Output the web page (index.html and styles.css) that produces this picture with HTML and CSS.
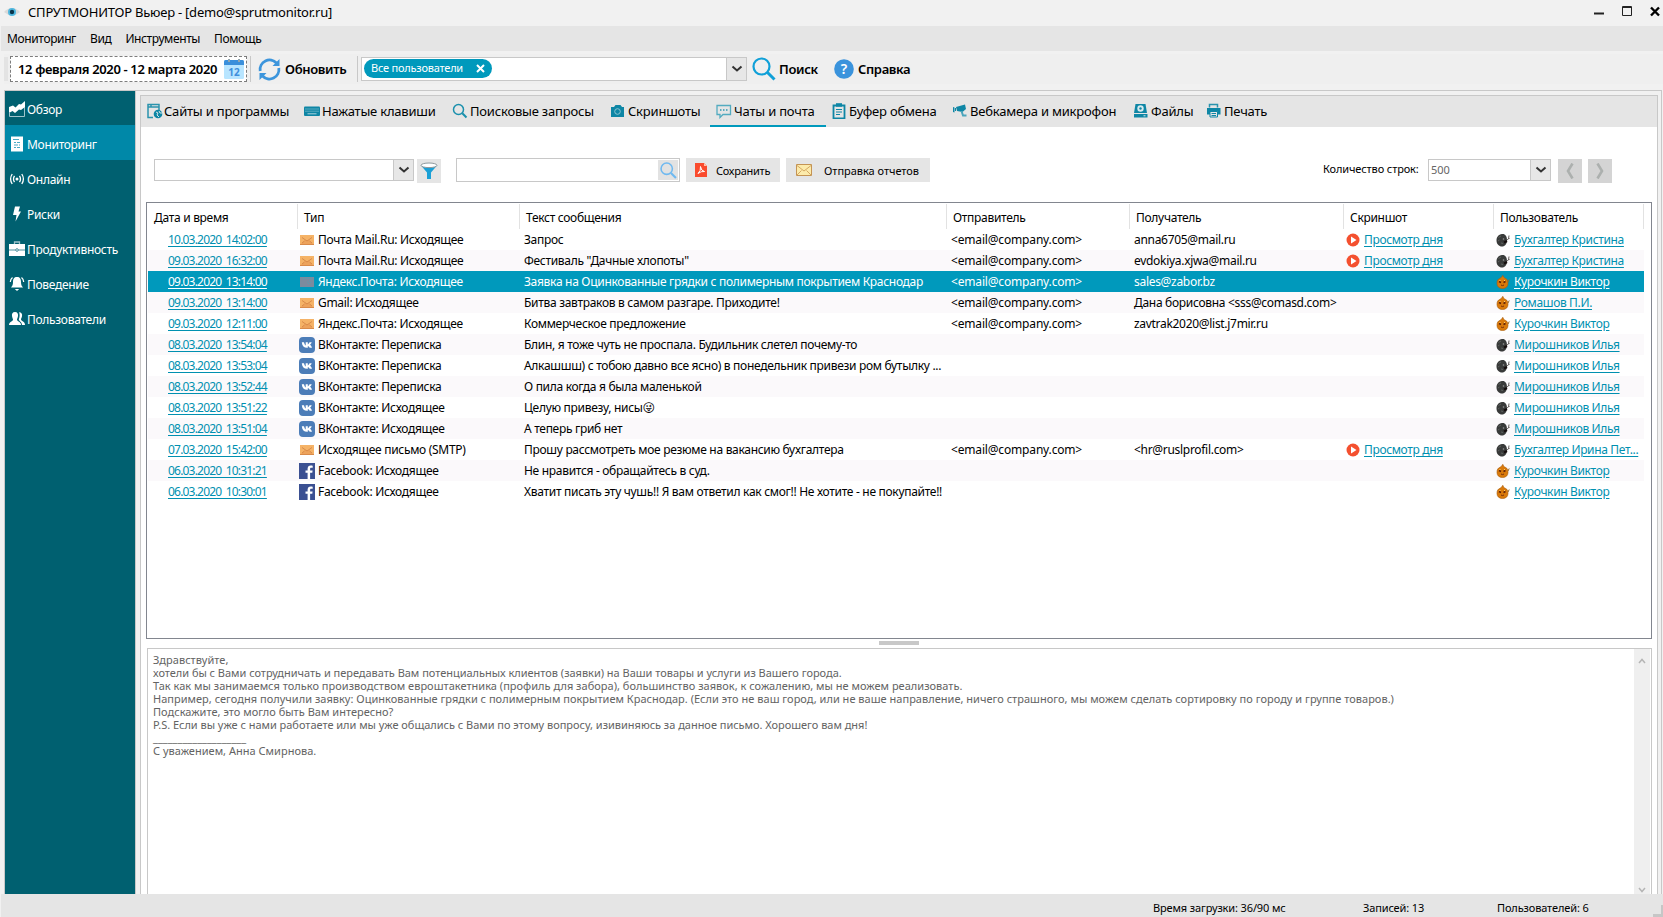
FILE: index.html
```html
<!DOCTYPE html>
<html lang="ru">
<head>
    <meta charset="UTF-8">
    <meta name="viewport" content="width=device-width, initial-scale=1.0">
    <title>СПРУТМОНИТОР Вьюер</title>
    <link rel="stylesheet" href="styles.css">
</head>
<body>
    <!-- shared icons -->
    <svg class="sprite" width="0" height="0">
        <symbol id="chevron" viewBox="0 0 12 8"><path d="M1.5 1.5 6 5.5l4.500-4" fill="none" stroke="currentColor" stroke-width="2"/></symbol>
        <symbol id="magnifier" viewBox="0 0 24 24"><circle cx="9.500" cy="9.500" r="8" fill="none" stroke="currentColor" stroke-width="2.200"/><path d="M15.500 15.500 22.500 22.500" stroke="currentColor" stroke-width="3"/></symbol>
        <symbol id="mail" viewBox="0 0 14 10"><path d="M0 0h14v10H0z" fill="#f5b367"/><path d="M0 10 5 5h4l5 5z" fill="#eda35c"/><path d="M2 2.500 7 6l5-3.500M0 9.500h14M2 8l2.500-2M12 8 9.500 6" fill="none" stroke="#d98b4a"/></symbol>
        <symbol id="mail-selected" viewBox="0 0 14 10"><path d="M0 0h14v10H0z" fill="#7b8b9e"/><path d="M3 1.500h9M7 5h1M9 4h1M8 6.500h1M10 5.500h1" stroke="#5f9aae" stroke-dasharray="1 1"/></symbol>
        <symbol id="vk" viewBox="0 0 16 16"><rect width="16" height="16" rx="4" fill="#4c7db8"/><path d="M2.800 5.200h2.200C5.300 6.800 5.900 7.900 6.700 8.400V5.200h2.100v2.200c.8-.3 1.300-1.200 1.700-2.200h2.200c-.3 1.200-1 2-1.700 2.600.9.600 1.600 1.500 2 2.900h-2.300c-.4-.9-1-1.600-1.900-1.800v1.800h-.7C5 10.700 3.100 8.900 2.800 5.200z" fill="#fff"/></symbol>
        <symbol id="fb" viewBox="0 0 16 16"><path d="M0 0h16v16H0z" fill="#3b5092"/><path d="M8.600 16V9.800H6.500V7.500h2.100V5.800c0-2.100 1.200-3.300 3.100-3.300.9 0 1.800.1 2 .2v2.100h-1.400c-1 0-1.200.5-1.200 1.200v1.500h2.500l-.3 2.300h-2.200V16z" fill="#fff"/></symbol>
        <symbol id="play" viewBox="0 0 14 14"><circle cx="7" cy="7" r="6.500" fill="#f4502f"/><path d="M5 3.500 10.500 7 5 10.500z" fill="#fff"/></symbol>
        <symbol id="dark" viewBox="0 0 14 14"><path d="M6 1C9 .5 11 3 11 7s-2 6.500-5 6.500S.5 11 .5 7.500 2.500 1.500 6 1z" fill="#393b3a"/><path d="M2.500 4.500 5 3M2 8l1.500-1M5 10l2 .5" stroke="#5d615e"/><path d="M10 7.500 12.500 6l.5-3.500M12.500 6l1-1" fill="none" stroke="#66605e"/><circle cx="7.500" cy="6" r=".8" fill="#999"/><path d="M8 9.500 11 8" stroke="#150d0d" stroke-width="2"/></symbol>
        <symbol id="orange" viewBox="0 0 14 14"><path d="M6.800.3c.6 1.500 1 2.300 2.500 3C11.500 4.200 12 6 12 8.500c0 3-2.200 5-5.500 5S1 11.500 1 8.500s.8-4.300 3-5.200C5.500 2.500 6.200 1.500 6.800.3z" fill="#d97a0b" stroke="#a65a0c" stroke-width=".6"/><path d="M3 6.500l2 1M9.500 6.500l-2 1" stroke="#5c1f08" stroke-width="1.400"/><path d="M5 10q1.500 1.200 3 0" fill="none" stroke="#742d0a"/><path d="M3.500 5.500h1M8 5.500h1" stroke="#ffd06b"/><path d="M12 7l1.200-2.500" stroke="#9a6d2a"/></symbol>
    </svg>

    <div class="titlebar">
        <svg class="eye" width="16" height="10" viewBox="0 0 16 10"><path d="M0 5Q8-3 16 5 8 12 0 5z" fill="#dadada"/><circle cx="8" cy="5" r="4" fill="#4fb8e0"/><circle cx="8" cy="5" r="2.200" fill="#08344a"/></svg>
        <span class="title">СПРУТМОНИТОР Вьюер - [demo@sprutmonitor.ru]</span>
        <svg class="window-buttons" width="68" height="12" viewBox="0 0 68 12">
            <path d="M0 7.500h10" stroke="#222" stroke-width="2"/>
            <path d="M28.500.5h9v9h-9zM28 1.500h10" fill="none" stroke="#222"/>
            <path d="m57 1.500 8 8M65 1.500l-8 8" stroke="#000" stroke-width="2.400"/>
        </svg>
    </div>

    <div class="menu">
        <span>Мониторинг</span>
        <span>Вид</span>
        <span>Инструменты</span>
        <span>Помощь</span>
    </div>

    <div class="toolbar">
        <div class="grip"></div>
        <div class="date-range">
            <span>12 февраля 2020 - 12 марта 2020</span>
            <svg width="20" height="20" viewBox="0 0 20 20"><rect y="1" width="20" height="19" rx="1.500" fill="#b8e5ff"/><path d="M0 6V2.500Q0 1 1.500 1h17Q20 1 20 2.500V6z" fill="#3a8fdb"/><path d="M5 0v3M15 0v3" stroke="#93a5ad" stroke-width="2"/><text class="cal-day" x="10" y="16.500" text-anchor="middle" fill="#3f8fdc">12</text></svg>
        </div>
        <div class="separator"></div>
        <div class="refresh">
            <svg width="23" height="23" viewBox="0 0 23 23"><path d="M2.200 13A9.500 9.500 0 0 1 18.500 5M20.800 10A9.500 9.500 0 0 1 4.500 18" fill="none" stroke="#3c95dc" stroke-width="2.800"/><path d="M21.500 1v7h-7zM1.500 22v-7h7z" fill="#3c95dc"/></svg>
            <span>Обновить</span>
        </div>
        <div class="separator"></div>
        <div class="users-combo">
            <div class="users-value">
                <span class="pill"><span>Все пользователи</span><svg width="9" height="9" viewBox="0 0 9 9"><path d="m1 1 7 7M8 1 1 8" stroke="#fff" stroke-width="2"/></svg></span>
            </div>
            <div class="drop"><svg width="12" height="8"><use href="#chevron"/></svg></div>
        </div>
        <svg class="find-icon" width="24" height="24"><use href="#magnifier"/></svg>
        <span class="find">Поиск</span>
        <svg class="help-icon" width="20" height="20" viewBox="0 0 20 20"><circle cx="10" cy="10" r="9.800" fill="#3a93dc"/><text class="help-mark" x="10" y="15" text-anchor="middle" fill="#fff">?</text></svg>
        <span class="help">Справка</span>
    </div>

    <div class="workspace">
        <div class="sidebar">
            <div class="nav">
                <svg width="16" height="16" viewBox="0 0 16 16"><path d="M.5 15.500h15V5" fill="none" stroke="#9fc4cc"/><path d="M0 12V6l4-1.500 2.500 2L10 3l2 .5L16 0v6l-4 3-2-.5L6 12l-2.500-2z" fill="#fff"/><path d="M.5 11v4.500" stroke="#9fc4cc"/></svg>
                <span>Обзор</span>
            </div>
            <div class="nav active">
                <svg width="16" height="16" viewBox="0 0 16 16"><path d="M2 .5h12v15H2z" fill="#fff"/><path d="M4 3.500h6M5 6.500h2M8 6.500h3M5 9h4M10 9h1M5 11.500h2M8 11.500h3" stroke="#4baac4"/></svg>
                <span>Мониторинг</span>
            </div>
            <div class="nav">
                <svg width="16" height="16" viewBox="0 0 16 16"><circle cx="8" cy="8" r="1.500" fill="#fff"/><path d="M5.500 4.800q-2 3.200 0 6.400M10.500 4.800q2 3.200 0 6.400M3.200 3q-3.200 5 0 10M12.800 3q3.200 5 0 10" fill="none" stroke="#fff" stroke-width="1.300"/></svg>
                <span>Онлайн</span>
            </div>
            <div class="nav">
                <svg width="16" height="16" viewBox="0 0 16 16"><path d="M6 .5h5L9.500 5.500H12L6.500 15.500 7.500 9H4z" fill="#fff"/></svg>
                <span>Риски</span>
            </div>
            <div class="nav">
                <svg width="16" height="16" viewBox="0 0 16 16"><path d="M5.500 3V1h5v2" fill="none" stroke="#9fc4cc" stroke-width="1.300"/><path d="M0 3h16v12H0z" fill="#fff"/><path d="M0 9h16" stroke="#4f919e"/><circle cx="8" cy="9" r="1.300" fill="#fff" stroke="#4f919e"/></svg>
                <span>Продуктивность</span>
            </div>
            <div class="nav">
                <svg width="16" height="16" viewBox="0 0 16 16"><path d="M8 1c3 0 4 2 4 5 0 2.500.6 4 2 5.500H2C3.400 10 4 8.500 4 6c0-3 1-5 4-5z" fill="#fff"/><path d="M5.800 13h4.400L8 15z" fill="#fff"/><path d="M3.500 1.500Q1.500 3 1.300 6M12.500 1.500q2 1.500 2.200 4.500" fill="none" stroke="#fff" stroke-width="1.200"/></svg>
                <span>Поведение</span>
            </div>
            <div class="nav">
                <svg width="16" height="16" viewBox="0 0 16 16"><path d="M6 1c2.500 0 3.300 1.700 3 4-.2 1.700-.8 2.500-1 3.500 0 2 4 2 4 5.500H0c0-3.500 4-3.500 4-5.500C3.800 7.500 3.200 6.700 3 5 2.700 2.700 3.500 1 6 1z" fill="#fff"/><path d="M10 1.200c2.500 0 3.500 1.800 3 4-.3 1.500-.8 2-1 3 0 2 4 2 4 5.800h-3c0-3-3.200-4-3.200-5.500C10.800 6 11 3 10 1.200z" fill="#fff"/></svg>
                <span>Пользователи</span>
            </div>
        </div>

        <div class="main">
            <div class="tabs">
                <div class="tab">
                    <svg width="16" height="16" viewBox="0 0 16 16"><path d="M6 14.500H1V1.500h11V7M1 4h11M4 1v3" fill="none" stroke="#2a93ad" stroke-width="1.500"/><circle cx="11" cy="11" r="4.300" fill="#0e86a5"/><path d="M9 9l2 1-1 2 2 2M12 8l1 2 2 0" fill="none" stroke="#d3e5e9"/></svg>
                    <span>Сайты и программы</span>
                </div>
                <div class="tab">
                    <svg width="16" height="16" viewBox="0 0 16 16"><rect x="0" y="3.500" width="16" height="9.500" rx="1" fill="#0e86a5"/><path d="M1.500 6h13M1.500 8.200h13" stroke="#a9d2dd" stroke-dasharray="1 1"/><path d="M3.500 10.800h9" stroke="#a9d2dd"/></svg>
                    <span>Нажатые клавиши</span>
                </div>
                <div class="tab">
                    <svg width="16" height="16" viewBox="0 0 16 16"><circle cx="6.500" cy="6.500" r="5" fill="none" stroke="#1b90ad" stroke-width="1.500"/><path d="M10.300 10.300 14.500 14.500" stroke="#1b90ad" stroke-width="2"/></svg>
                    <span>Поисковые запросы</span>
                </div>
                <div class="tab">
                    <svg width="16" height="16" viewBox="0 0 16 16"><path d="M1 4h3l1.500-2h5L12 4h2v10H1z" fill="#0e86a5"/><circle cx="7.500" cy="8.500" r="2.800" fill="none" stroke="#8dc5d3"/></svg>
                    <span>Скриншоты</span>
                </div>
                <div class="tab active">
                    <svg width="16" height="16" viewBox="0 0 16 16"><path d="M1 2.500h13.500v9H7l-3 3v-3H1z" fill="none" stroke="#53abc0" stroke-width="1.300"/><path d="M4 7h1.500M7 7h1.500M10 7h1.500" stroke="#2f98b2" stroke-width="1.500"/></svg>
                    <span>Чаты и почта</span>
                </div>
                <div class="tab">
                    <svg width="16" height="16" viewBox="0 0 16 16"><path d="M2.500 2.500h11v13h-11z" fill="none" stroke="#0e86a5" stroke-width="1.800"/><path d="M5 .2h6v3.500H5z" fill="#0e86a5"/><path d="M5 6.500h6M5 9h6M5 11.500h4" stroke="#0e86a5"/></svg>
                    <span>Буфер обмена</span>
                </div>
                <div class="tab">
                    <svg width="16" height="16" viewBox="0 0 16 16"><path d="M4 4l9-2.500 1 4.500-3.500 3L5 8z" fill="#0e86a5"/><path d="M1 4l1.500.5v5L1 9zM3 5h1v3H3z" fill="#0e86a5"/><path d="M9.500 8l1.500 4.500 3.500 0" fill="none" stroke="#4ba5bc" stroke-width="2"/></svg>
                    <span>Вебкамера и микрофон</span>
                </div>
                <div class="tab">
                    <svg width="16" height="16" viewBox="0 0 16 16"><path d="M2.500 1h10l1.500 9H1z" fill="#0e86a5"/><path d="M1 11h13.500v3.500H1z" fill="#0e86a5"/><circle cx="7.500" cy="5.500" r="3.200" fill="#d7eaee"/><circle cx="7.500" cy="5.500" r="1.200" fill="#0e86a5"/><path d="M10.500 12.800h2" stroke="#d7eaee"/></svg>
                    <span>Файлы</span>
                </div>
                <div class="tab">
                    <svg width="16" height="16" viewBox="0 0 16 16"><path d="M3.500 4.500V1.500h8v3" fill="none" stroke="#2a93ad" stroke-width="1.500"/><path d="M1 5h13.500v6.500H1z" fill="#0e86a5"/><path d="M4 8.500h7.500v5.500H4z" fill="#e5e5e5" stroke="#0e86a5"/><path d="M5.500 10.500h4.500M5.500 12.500h4.500" stroke="#0e86a5"/></svg>
                    <span>Печать</span>
                </div>
            </div>

            <div class="filters">
                <div class="combo filter-combo"><span></span><div class="drop"><svg width="12" height="8"><use href="#chevron"/></svg></div></div>
                <div class="funnel"><svg width="18" height="18" viewBox="0 0 18 18"><path d="M1 3.500 7 10.500V17h4v-6.500l6-7z" fill="#1ba0d6"/><ellipse cx="9" cy="3.300" rx="8" ry="2.300" fill="#fff" stroke="#8f9a9e"/></svg></div>
                <div class="search"><div class="search-button"><svg width="17" height="17"><use href="#magnifier"/></svg></div></div>
                <div class="button save">
                    <svg width="12" height="14" viewBox="0 0 12 14"><path d="M0 0h9l3 3v11H0z" fill="#fa4b2d"/><path d="M9 0v3h3z" fill="#ffc2a8"/><path d="M3 10.500Q6 8 5.500 3.500 6 8 9.500 8.500 6 8 3 10.500z" fill="none" stroke="#fff"/></svg>
                    <span>Сохранить</span>
                </div>
                <div class="button reports">
                    <svg width="16" height="12" viewBox="0 0 16 12"><path d="M.5.500h15v11H.5z" fill="#fcebab" stroke="#c49454"/><path d="M1 1.500 8 7l7-5.500M1 11l4.500-4.500M15 11l-4.500-4.500" fill="none" stroke="#d5a763"/></svg>
                    <span>Отправка отчетов</span>
                </div>
                <span class="rows-label">Количество строк:</span>
                <div class="combo rows-combo"><span>500</span><div class="drop"><svg width="12" height="8"><use href="#chevron"/></svg></div></div>
                <div class="page"><svg width="8" height="16" viewBox="0 0 8 16"><path d="M6.500.5 2 8l4.500 7.500" fill="none" stroke="#acb0ae" stroke-width="2.600"/></svg></div>
                <div class="page"><svg width="8" height="16" viewBox="0 0 8 16"><path d="M1.500.5 6 8 1.500 15.500" fill="none" stroke="#acb0ae" stroke-width="2.600"/></svg></div>
            </div>

            <div class="grid">
                <table>
                    <colgroup><col class="c-date"><col class="c-type"><col class="c-text"><col class="c-from"><col class="c-to"><col class="c-shot"><col class="c-user"></colgroup>
                    <thead>
                        <tr><th><span>Дата и время</span></th><th><span>Тип</span></th><th><span>Текст сообщения</span></th><th><span>Отправитель</span></th><th><span>Получатель</span></th><th><span>Скриншот</span></th><th><span>Пользователь</span></th></tr>
                    </thead>
                    <tbody>
                        <tr><td><a>10.03.2020 14:02:00</a></td><td><svg class="env"><use href="#mail"/></svg>Почта Mail.Ru: Исходящее</td><td>Запрос</td><td>&lt;email@company.com&gt;</td><td>anna6705@mail.ru</td><td><svg class="play"><use href="#play"/></svg><a>Просмотр дня</a></td><td><svg class="face"><use href="#dark"/></svg><a>Бухгалтер Кристина</a></td></tr>
                        <tr><td><a>09.03.2020 16:32:00</a></td><td><svg class="env"><use href="#mail"/></svg>Почта Mail.Ru: Исходящее</td><td>Фестиваль "Дачные хлопоты"</td><td>&lt;email@company.com&gt;</td><td>evdokiya.xjwa@mail.ru</td><td><svg class="play"><use href="#play"/></svg><a>Просмотр дня</a></td><td><svg class="face"><use href="#dark"/></svg><a>Бухгалтер Кристина</a></td></tr>
                        <tr class="selected"><td><a>09.03.2020 13:14:00</a></td><td><svg class="env"><use href="#mail-selected"/></svg>Яндекс.Почта: Исходящее</td><td>Заявка на Оцинкованные грядки с полимерным покрытием Краснодар</td><td>&lt;email@company.com&gt;</td><td>sales@zabor.bz</td><td></td><td><svg class="face"><use href="#orange"/></svg><a>Курочкин Виктор</a></td></tr>
                        <tr><td><a>09.03.2020 13:14:00</a></td><td><svg class="env"><use href="#mail"/></svg>Gmail: Исходящее</td><td>Битва завтраков в самом разгаре. Приходите!</td><td>&lt;email@company.com&gt;</td><td>Дана борисовна &lt;sss@comasd.com&gt;</td><td></td><td><svg class="face"><use href="#orange"/></svg><a>Ромашов П.И.</a></td></tr>
                        <tr><td><a>09.03.2020 12:11:00</a></td><td><svg class="env"><use href="#mail"/></svg>Яндекс.Почта: Исходящее</td><td>Коммерческое предложение</td><td>&lt;email@company.com&gt;</td><td>zavtrak2020@list.j7mir.ru</td><td></td><td><svg class="face"><use href="#orange"/></svg><a>Курочкин Виктор</a></td></tr>
                        <tr><td><a>08.03.2020 13:54:04</a></td><td><svg class="social"><use href="#vk"/></svg>ВКонтакте: Переписка</td><td>Блин, я тоже чуть не проспала. Будильник слетел почему-то</td><td></td><td></td><td></td><td><svg class="face"><use href="#dark"/></svg><a>Мирошников Илья</a></td></tr>
                        <tr><td><a>08.03.2020 13:53:04</a></td><td><svg class="social"><use href="#vk"/></svg>ВКонтакте: Переписка</td><td>Алкашшш) с тобою давно все ясно) в понедельник привези ром бутылку ...</td><td></td><td></td><td></td><td><svg class="face"><use href="#dark"/></svg><a>Мирошников Илья</a></td></tr>
                        <tr><td><a>08.03.2020 13:52:44</a></td><td><svg class="social"><use href="#vk"/></svg>ВКонтакте: Переписка</td><td>О пила когда я была маленькой</td><td></td><td></td><td></td><td><svg class="face"><use href="#dark"/></svg><a>Мирошников Илья</a></td></tr>
                        <tr><td><a>08.03.2020 13:51:22</a></td><td><svg class="social"><use href="#vk"/></svg>ВКонтакте: Исходящее</td><td>Целую привезу, нисы<span class="emoji">😜</span></td><td></td><td></td><td></td><td><svg class="face"><use href="#dark"/></svg><a>Мирошников Илья</a></td></tr>
                        <tr><td><a>08.03.2020 13:51:04</a></td><td><svg class="social"><use href="#vk"/></svg>ВКонтакте: Исходящее</td><td>А теперь гриб нет</td><td></td><td></td><td></td><td><svg class="face"><use href="#dark"/></svg><a>Мирошников Илья</a></td></tr>
                        <tr><td><a>07.03.2020 15:42:00</a></td><td><svg class="env"><use href="#mail"/></svg>Исходящее письмо (SMTP)</td><td>Прошу рассмотреть мое резюме на вакансию бухгалтера</td><td>&lt;email@company.com&gt;</td><td>&lt;hr@ruslprofil.com&gt;</td><td><svg class="play"><use href="#play"/></svg><a>Просмотр дня</a></td><td><svg class="face"><use href="#dark"/></svg><a>Бухгалтер Ирина Пет...</a></td></tr>
                        <tr><td><a>06.03.2020 10:31:21</a></td><td><svg class="social"><use href="#fb"/></svg>Facebook: Исходящее</td><td>Не нравится - обращайтесь в суд.</td><td></td><td></td><td></td><td><svg class="face"><use href="#orange"/></svg><a>Курочкин Виктор</a></td></tr>
                        <tr><td><a>06.03.2020 10:30:01</a></td><td><svg class="social"><use href="#fb"/></svg>Facebook: Исходящее</td><td>Хватит писать эту чушь!! Я вам ответил как смог!! Не хотите - не покупайте!!</td><td></td><td></td><td></td><td><svg class="face"><use href="#orange"/></svg><a>Курочкин Виктор</a></td></tr>
                    </tbody>
                </table>
            </div>

            <div class="splitter"></div>

            <div class="message">
                <div class="message-text">Здравствуйте,<br>
                <span class="tight">хотели бы с Вами сотрудничать и передавать Вам потенциальных клиентов (заявки) на Ваши товары и услуги из Вашего города.</span><br>
                Так как мы занимаемся только производством евроштакетника (профиль для забора), большинство заявок, к сожалению, мы не можем реализовать.<br>
                Например, сегодня получили заявку: Оцинкованные грядки с полимерным покрытием Краснодар. (Если это не ваш город, или не ваше направление, ничего страшного, мы можем сделать сортировку по городу и группе товаров.)<br>
                Подскажите, это могло быть Вам интересно?<br>
                <span class="tight">P.S. Если вы уже с нами работаете или мы уже общались с Вами по этому вопросу, изивиняюсь за данное письмо. Хорошего вам дня!</span><br>
                ___________________<br>
                С уважением, Анна Смирнова.</div>
                <div class="scrollbar">
                    <svg width="8" height="6" viewBox="0 0 8 6"><path d="M1 5 4 1.500 7 5" fill="none" stroke="#b5b5b5" stroke-width="1.500"/></svg>
                    <svg width="8" height="6" viewBox="0 0 8 6"><path d="M1 1 4 4.500 7 1" fill="none" stroke="#b5b5b5" stroke-width="1.500"/></svg>
                </div>
            </div>
        </div>
    </div>

    <div class="statusbar">
        <span class="load-time">Время загрузки: 36/90 мс</span>
        <span class="records">Записей: 13</span>
        <span class="users">Пользователей: 6</span>
        <svg class="resize" width="10" height="12" viewBox="0 0 10 12"><path d="M8 0h2v12H0v-3h8z" fill="#c6c6c6"/></svg>
    </div>
</body>
</html>
```
FILE: styles.css
```css
* {
    box-sizing: border-box;
}
body {
    display: flex;
    flex-direction: column;
    height: 917px;
    margin: 0;
    overflow: hidden;
    background-color: #f1f1f1;
    color: #000;
    font-family: "Noto Sans", "Open Sans", sans-serif;
    font-size: 12px;
    letter-spacing: -0.3px;
    white-space: nowrap;
}
svg {
    display: block;
    flex: none;
}
.sprite {
    position: absolute;
}

/* window title and menu */
.titlebar {
    display: flex;
    align-items: center;
    flex: none;
    height: 26px;
    padding: 0 0 2px 4px;
    font-size: 13px;
    letter-spacing: -0.23px;
}
.title {
    margin-left: 8px;
}
.window-buttons {
    margin-left: auto;
    margin-right: 1px;
}
.menu {
    display: flex;
    align-items: center;
    flex: none;
    gap: 14px;
    height: 25px;
    margin-left: 1px;
    padding-left: 6px;
    background-color: #e5e5e5;
    letter-spacing: -0.38px;
}

/* toolbar */
.toolbar {
    display: flex;
    align-items: center;
    flex: none;
    height: 30px;
    margin: 3px 0 6px 4px;
    background-color: #efefef;
    font-size: 13px;
    font-weight: 600;
    letter-spacing: -0.36px;
}
.grip {
    width: 4px;
    height: 24px;
    margin-right: 2px;
    background-color: #e3e3e3;
}
.date-range {
    display: flex;
    align-items: center;
    justify-content: space-between;
    width: 237px;
    height: 26px;
    padding: 0 2px 0 7px;
    background-color: #fff;
    border: 1px dashed #7d7d7d;
}
.cal-day {
    font-size: 10px;
    font-weight: 700;
    letter-spacing: 0;
}
.separator {
    width: 1px;
    height: 26px;
    margin-left: 3px;
    background-color: #c8c8c8;
}
.refresh {
    display: flex;
    align-items: center;
    gap: 4px;
    width: 104px;
    padding-left: 7px;
}
.refresh + .separator {
    margin-left: 2px;
}
.users-combo {
    display: flex;
    width: 386px;
    height: 24px;
    margin-left: 3px;
    background-color: #fff;
    border: 1px solid #c8c8c8;
}
.users-value {
    flex: 1;
    padding: 1px 2px;
}
.pill {
    display: flex;
    align-items: center;
    justify-content: space-between;
    width: 128px;
    height: 19px;
    padding: 0 7px 2px;
    border-radius: 10px;
    background-color: #0099bc;
    color: #fff;
    font-size: 11px;
    font-weight: 400;
    letter-spacing: -0.22px;
}
.pill svg {
    margin-top: 1px;
}
.drop {
    display: flex;
    align-items: center;
    justify-content: center;
    width: 20px;
    border-left: 1px solid #c8c8c8;
    background-color: #e7e7e7;
    color: #333;
}
.find-icon {
    margin-left: 5px;
    color: #10a0d8;
}
.find {
    width: 50px;
    margin-left: 3px;
}
.help-icon {
    margin-left: 5px;
    margin-right: 4px;
}
.help-mark {
    font-size: 14px;
    font-weight: 600;
    letter-spacing: 0;
}

/* workspace */
.workspace {
    display: flex;
    flex: none;
    height: 804px;
    margin: 0 1px 0 4px;
    border: 1px solid #c8c8c8;
    border-bottom: 0;
    gap: 4px;
}
.sidebar {
    width: 131px;
    background-color: #006070;
    border-right: 1px solid #c8c8c8;
    color: #fff;
}
.nav {
    display: flex;
    align-items: center;
    gap: 2px;
    height: 35px;
    padding-top: 3px;
    padding-left: 4px;
}
.nav.active {
    background-color: #0088a8;
}
.nav:first-child {
    height: 34px;
    padding-top: 2px;
}
.main {
    display: flex;
    flex-direction: column;
    width: 1518px;
    height: 799px;
    margin-top: 4px;
    border: 1px solid #c8c8c8;
    border-bottom: 0;
    background-color: #fff;
}
.tabs {
    display: grid;
    grid-template-columns: 157px 148px 158px 106px 115px 121px 181px 73px 80px;
    flex: none;
    height: 31px;
    padding-left: 1px;
    background-color: #e5e5e5;
    font-size: 13px;
    letter-spacing: -0.2px;
}
.tab {
    display: flex;
    align-items: center;
    gap: 2px;
    padding: 0 0 2px 5px;
}
.tab:first-child {
    gap: 1px;
}
.tab.active {
    margin-left: -1px;
    padding-bottom: 0;
    padding-left: 6px;
    border-bottom: 2px solid #0099bc;
}

/* filters row */
.filters {
    display: flex;
    align-items: center;
    flex: none;
    height: 24px;
    margin: 31px 0 20px 13px;
    font-size: 11px;
    letter-spacing: -0.1px;
}
.combo {
    display: flex;
    height: 22px;
    background-color: #fff;
    border: 1px solid #c8c8c8;
}
.combo span {
    flex: 1;
    padding-left: 2px;
    line-height: 20px;
    color: #666;
}
.filter-combo {
    width: 260px;
}
.funnel {
    display: flex;
    align-items: center;
    justify-content: center;
    width: 24px;
    height: 24px;
    margin: 1px 0 0 3px;
    background-color: #e5e5e5;
}
.search {
    display: flex;
    justify-content: flex-end;
    width: 224px;
    height: 24px;
    margin-left: 15px;
    padding: 1px;
    border: 1px solid #c8c8c8;
}
.search-button {
    display: flex;
    align-items: center;
    justify-content: center;
    width: 20px;
    height: 20px;
    background-color: #e2e2e2;
    color: #6fb9f0;
}
.button {
    display: flex;
    align-items: center;
    height: 24px;
    margin-left: 6px;
    background-color: #e5e5e5;
}
.save {
    width: 94px;
    padding-left: 9px;
    gap: 9px;
    letter-spacing: -0.25px;
}
.reports {
    width: 144px;
    padding-left: 10px;
    gap: 12px;
    letter-spacing: -0.03px;
}
.rows-label {
    width: 95px;
    margin-left: 393px;
    padding-bottom: 4px;
    letter-spacing: -0.12px;
}
.rows-combo {
    width: 123px;
    margin-left: 10px;
}
.page {
    display: flex;
    align-items: center;
    justify-content: center;
    width: 24px;
    height: 24px;
    margin: 1px 0 0 7px;
    background-color: #d4d4d4;
}
.page + .page {
    margin-left: 6px;
}

/* messages grid */
.grid {
    flex: none;
    width: 1506px;
    height: 437px;
    margin-left: 5px;
    padding: 1px 0 0 1px;
    border: 1px solid #82868f;
}
table {
    width: 1496px;
    table-layout: fixed;
    border-collapse: separate;
    border-spacing: 0;
}
.c-date { width: 150px; }
.c-type { width: 222px; }
.c-text { width: 427px; }
.c-from { width: 183px; }
.c-to { width: 214px; }
.c-shot { width: 150px; }
.c-user { width: 150px; }
th {
    height: 25px;
    padding: 2px 0 0 6px;
    border-right: 1px solid #e2e2e2;
    font-weight: 400;
    text-align: left;
}
td {
    height: 21px;
    padding: 0 0 0 4px;
    line-height: 20px;
}
tbody tr:nth-child(even) {
    background-color: #fbf9fb;
}
td:first-child {
    padding-left: 20px;
    letter-spacing: -0.8px;
    word-spacing: 2px;
}
td:nth-child(2),
td:nth-child(6) {
    padding-left: 1px;
}
td:nth-child(4) {
    letter-spacing: -0.17px;
}
td:nth-child(6),
td:nth-child(7) {
    letter-spacing: -0.35px;
}
td:nth-child(7) {
    padding-left: 3px;
}
td svg {
    display: inline-block;
    vertical-align: middle;
}
td a {
    color: #0090b0;
    text-decoration: underline;
    text-underline-offset: 2px;
}
tbody tr.selected {
    background-color: #0099bc;
    color: #fff;
}
.selected a {
    color: #fff;
}
.env {
    width: 14px;
    height: 10px;
    margin: 0 4px 1px 1px;
}
.social {
    width: 16px;
    height: 16px;
    margin: 0 3px 1px 0;
}
.play {
    width: 14px;
    height: 14px;
    margin: 0 4px 1px 1px;
}
.face {
    width: 14px;
    height: 14px;
    margin: 0 4px 0 -1px;
}
.emoji {
    font-family: "DejaVu Sans", sans-serif;
}

/* message preview */
.splitter {
    flex: none;
    align-self: center;
    width: 40px;
    height: 4px;
    margin: 2px 0 3px;
    background-color: #c8c8c8;
}
.message {
    display: flex;
    flex: 1;
    width: 1505px;
    margin-left: 6px;
    border: 1px solid #c8c8c8;
    border-bottom: 0;
}
.message-text {
    flex: 1;
    padding: 4px 5px;
    color: #636363;
    font-size: 11px;
    line-height: 13px;
    letter-spacing: 0.02px;
}
.tight {
    letter-spacing: -0.02px;
}
.scrollbar {
    display: flex;
    flex-direction: column;
    align-items: center;
    justify-content: space-between;
    width: 16px;
    padding: 9px 0 1px;
    margin-right: 1px;
    background-color: #efefef;
}

/* status bar */
.statusbar {
    display: flex;
    align-items: center;
    flex: none;
    height: 23px;
    margin-left: 1px;
    padding-left: 1152px;
    background-color: #e5e5e5;
    font-size: 11px;
    letter-spacing: -0.13px;
}
.statusbar span {
    margin-top: 3px;
}
.load-time {
    width: 210px;
}
.records {
    width: 134px;
}
.resize {
    margin-left: auto;
    align-self: flex-end;
}
```
